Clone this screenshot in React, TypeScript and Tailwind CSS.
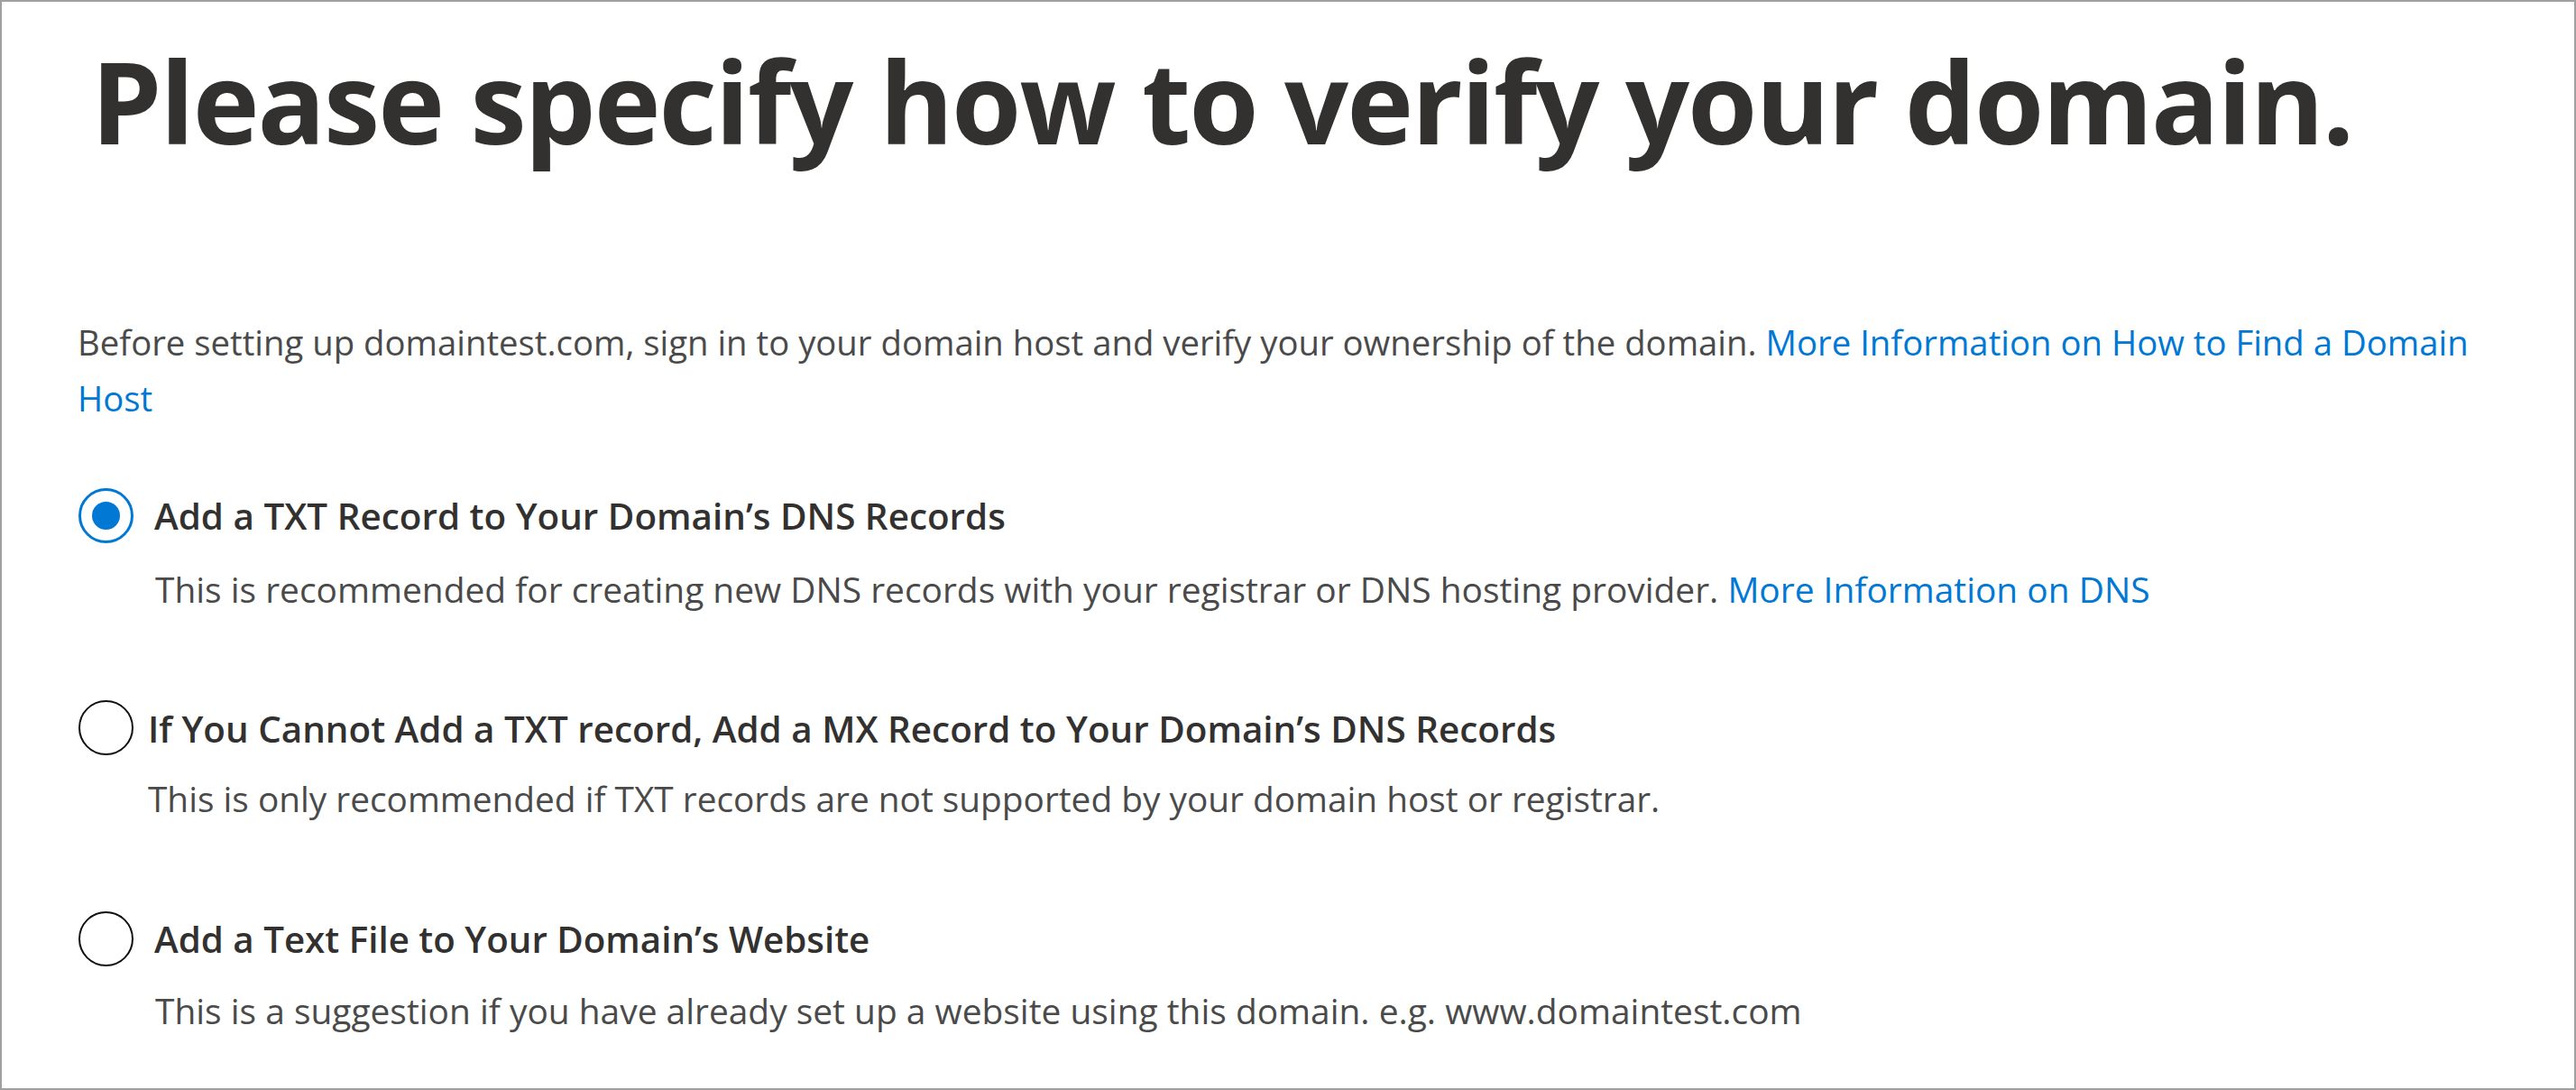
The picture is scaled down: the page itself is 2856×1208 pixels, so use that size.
import React from "react";

function Radio({ checked }: { checked?: boolean }) {
  if (checked) {
    return (
      <div className="w-[61px] h-[61px] shrink-0 rounded-full border-[3px] border-[#0078d4] flex items-center justify-center">
        <div className="w-[31px] h-[31px] rounded-full bg-[#0078d4]" />
      </div>
    );
  }
  return <div className="w-[61px] h-[61px] shrink-0 rounded-full border-2 border-[#111]" />;
}

export default function App() {
  return (
    <div className="relative w-[2856px] h-[1208px] box-border border-2 border-[#a0a0a0] bg-white overflow-hidden font-['Open_Sans',sans-serif]">
      <div className="pl-[84px] pr-[84px]">
        <h1 className="ml-[15px] mt-[47px] text-[125px] leading-[125px] tracking-[-2px] font-bold text-[#323130] whitespace-nowrap">
          Please specify how to verify your domain.
        </h1>
        <p className="mt-[174px] text-[38.3px] leading-[62px] text-[#4a4a4a]">
          Before setting up domaintest.com, sign in to your domain host and verify your ownership of the domain.{" "}
          <a className="text-[#0078d4]">More Information on How to Find a Domain Host</a>
        </p>

        <div className="mt-[69px] flex items-center">
          <div className="ml-[1px]"><Radio checked /></div>
          <span className="ml-[23px] text-[40.4px] leading-[61px] font-semibold text-[#323130]">
            Add a TXT Record to Your Domain’s DNS Records
          </span>
        </div>
        <p className="mt-[20px] pl-[86px] text-[38.9px] leading-[62px] text-[#4a4a4a]">
          This is recommended for creating new DNS records with your registrar or DNS hosting provider.{" "}
          <a className="text-[#0078d4]">More Information on DNS</a>
        </p>

        <div className="mt-[90px] flex items-center">
          <div className="ml-[1px]"><Radio /></div>
          <span className="ml-[16px] mt-[3px] text-[40.4px] leading-[61px] font-semibold text-[#323130]">
            If You Cannot Add a TXT record, Add a MX Record to Your Domain’s DNS Records
          </span>
        </div>
        <p className="mt-[16px] pl-[78px] text-[38.8px] leading-[62px] text-[#4a4a4a]">
          This is only recommended if TXT records are not supported by your domain host or registrar.
        </p>

        <div className="mt-[94px] flex items-center">
          <div className="ml-[1px]"><Radio /></div>
          <span className="ml-[23px] text-[40.3px] leading-[61px] font-semibold text-[#323130]">
            Add a Text File to Your Domain’s Website
          </span>
        </div>
        <p className="mt-[18px] pl-[86px] text-[38.9px] leading-[62px] text-[#4a4a4a]">
          This is a suggestion if you have already set up a website using this domain. e.g. www.domaintest.com
        </p>
      </div>
    </div>
  );
}
